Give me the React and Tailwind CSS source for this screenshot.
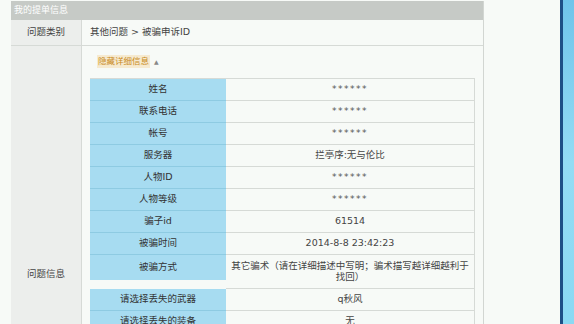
const rows = [
  { label: "姓名", value: "******", mask: true },
  { label: "联系电话", value: "******", mask: true },
  { label: "帐号", value: "******", mask: true },
  { label: "服务器", value: "拦亭序:无与伦比" },
  { label: "人物ID", value: "******", mask: true },
  { label: "人物等级", value: "******", mask: true },
  { label: "骗子id", value: "61514" },
  { label: "被骗时间", value: "2014-8-8 23:42:23" },
];

const lostRows = [
  { label: "请选择丢失的武器", value: "q秋风" },
  { label: "请选择丢失的装备", value: "无" },
];

function InfoRow({ label, value, mask }) {
  return (
    <div className="flex h-[22px]">
      <div className="flex w-[136px] items-center justify-center border-b border-[#8ecbe2] bg-[#a7dcf1] text-[9.5px] text-[#333]">
        {label}
      </div>
      <div
        className={
          mask
            ? "flex flex-1 items-center justify-center border-b border-r border-[#d6dad6] text-[9px] tracking-[1.5px] text-[#555]"
            : "flex flex-1 items-center justify-center border-b border-r border-[#d6dad6] text-[9.5px] text-[#444]"
        }
      >
        {value}
      </div>
    </div>
  );
}

export default function App() {
  return (
    <div className="flex h-[324px] w-[574px] overflow-hidden bg-[#f7faf7] font-['DejaVu_Sans','Noto_Sans_CJK_SC',sans-serif]">
      <div className="w-[484px] pl-[11px] pt-[1px]">
        <div className="border-r border-[#d2d6d2]">
          <div className="flex h-[19px] items-center bg-[#c6cac6] pl-[3px] text-[9px] text-white">
            我的提单信息
          </div>

          <div className="flex h-[26px] border-b border-[#d6dad6]">
            <div className="flex w-[71px] items-center justify-center border-r border-[#d6dad6] bg-[#eceeec] text-[9.5px] text-[#444]">
              问题类别
            </div>
            <div className="flex flex-1 items-center pl-[8px] text-[9.5px] text-[#444]">
              其他问题 &gt; 被骗申诉ID
            </div>
          </div>

          <div className="flex h-[290px]">
            <div className="flex w-[71px] justify-center border-r border-[#d6dad6] bg-[#eceeec] pt-[221px] text-[9.5px] text-[#444]">
              问题信息
            </div>
            <div className="flex-1 pl-[8px] pt-[9px]">
              <div className="ml-[7px] flex items-center gap-[4px] text-[8.5px] text-[#c98a22]">
                <span className="bg-[#f6ead0] px-[1px]">隐藏详细信息</span>
                <span className="text-[6px] text-[#888]">▲</span>
              </div>

              <div className="mt-[10px] w-[385px] border-t border-[#d6dad6]">
                {rows.map((r) => (
                  <InfoRow key={r.label} {...r} />
                ))}

                <div className="flex h-[34px] items-start">
                  <div className="flex h-[25px] w-[136px] items-center justify-center bg-[#a7dcf1] text-[9.5px] text-[#333]">
                    被骗方式
                  </div>
                  <div className="flex h-[34px] flex-1 flex-col items-center justify-center border-b border-r border-[#d6dad6] text-center text-[9.5px] leading-[11px] text-[#444]">
                    <span>其它骗术（请在详细描述中写明；骗术描写越详细越利于</span>
                    <span>找回）</span>
                  </div>
                </div>

                {lostRows.map((r) => (
                  <InfoRow key={r.label} {...r} />
                ))}
              </div>
            </div>
          </div>
        </div>
      </div>

      <div className="flex-1" />
      <div className="w-[14px] border-l-[3px] border-[#1d4f86] bg-gradient-to-b from-[#6fc4ea] via-[#93dcf4] to-[#8ad9f3]" />
    </div>
  );
}
